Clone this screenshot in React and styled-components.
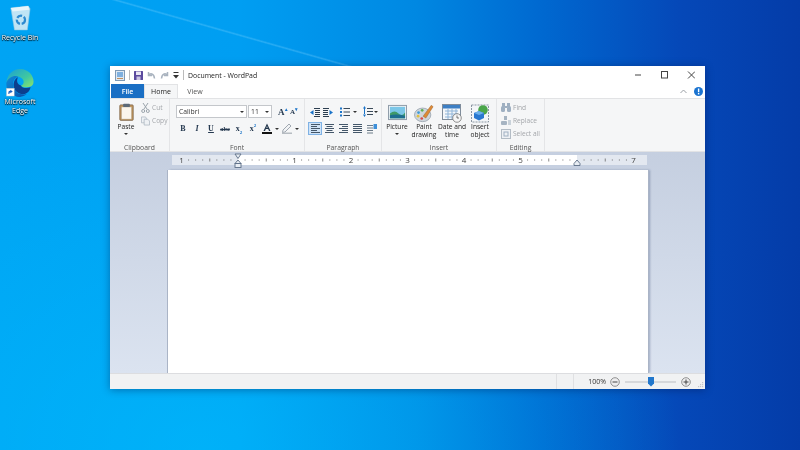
import styled, { createGlobalStyle } from 'styled-components'

const GlobalStyle = createGlobalStyle`
  html, body { margin: 0; padding: 0; width: 800px; height: 450px; overflow: hidden; }
  * { box-sizing: border-box; }
`

const Desktop = styled.div`
  position: relative;
  width: 800px;
  height: 450px;
  overflow: hidden;
  font-family: "Open Sans", "Liberation Sans", sans-serif;
  filter: blur(0.3px);
  background:
    linear-gradient(195.8deg, transparent 76px, rgba(150, 220, 255, 0.28) 77.6px, transparent 79px) 0 0 / 400px 66px no-repeat,
    radial-gradient(ellipse 480px 330px at 200px 450px, rgba(0, 195, 255, 0.5), rgba(0, 195, 255, 0) 100%),
    linear-gradient(90deg, #00a4f4 0%, #009ef2 30%, #0088e2 52%, #0068d0 68%, #0548b8 85%, #043ca8 100%);
`

const DesktopIcon = styled.div`
  position: absolute;
  left: ${({ $left }) => $left}px;
  top: ${({ $top }) => $top}px;
  width: 40px;
  display: flex;
  flex-direction: column;
  align-items: center;
  gap: ${({ $gap }) => $gap}px;
  color: #fff;
  font-size: 7px;
  line-height: 9px;
  text-align: center;
  text-shadow: 0 0 2px #000, 0 1px 1px #000;
`

const Window = styled.div`
  position: absolute;
  left: 110px;
  top: 66px;
  width: 595px;
  height: 323px;
  display: flex;
  flex-direction: column;
  background: #fff;
  box-shadow: 0 1px 8px rgba(0, 20, 70, 0.4);
  color: #333;
`

const TitleBar = styled.div`
  height: 18px;
  display: flex;
  align-items: center;
  padding-left: 5px;
  gap: 4px;
  font-size: 6.9px;
  color: #222;
`

const Sep = styled.div`
  width: 1px;
  height: 10px;
  background: #bbb;
`

const WinButtons = styled.div`
  margin-left: auto;
  display: flex;
  height: 100%;
  align-items: center;
  gap: 17px;
  padding-right: 10px;
`

const TabRow = styled.div`
  height: 14px;
  display: flex;
  align-items: stretch;
  font-size: 7px;
  position: relative;
`

const FileTab = styled.div`
  width: 33px;
  margin-left: 1px;
  background: #1a6fc4;
  color: #fff;
  font-weight: 600;
  display: flex;
  align-items: center;
  justify-content: center;
`

const Tab = styled.div`
  width: 34px;
  display: flex;
  align-items: center;
  justify-content: center;
  color: ${({ $active }) => ($active ? '#222' : '#555')};
  background: ${({ $active }) => ($active ? '#f5f6f7' : 'transparent')};
  border: 1px solid ${({ $active }) => ($active ? '#e2e3e5' : 'transparent')};
  border-bottom: none;
`

const TabTools = styled.div`
  margin-left: auto;
  display: flex;
  align-items: center;
  gap: 7px;
  padding-right: 2px;
`

const Ribbon = styled.div`
  height: 54px;
  display: flex;
  background: #f5f6f7;
  border-top: 1px solid #e2e3e5;
  border-bottom: 1px solid #e2e3e5;
`

const Group = styled.div`
  width: ${({ $w }) => $w}px;
  display: flex;
  flex-direction: column;
  border-right: 1px solid #e4e5e7;
`

const GroupBody = styled.div`
  flex: 1;
  display: flex;
  padding: ${({ $pad }) => $pad || '4px 0 0 4px'};
  gap: ${({ $gap }) => $gap || 0}px;
`

const GroupLabel = styled.div`
  height: 10px;
  margin-bottom: -1.5px;
  font-size: 6.8px;
  line-height: 10px;
  color: #555;
  text-align: center;
`

const BigButton = styled.div`
  width: ${({ $w }) => $w || 28}px;
  display: flex;
  flex-direction: column;
  align-items: center;
  font-size: 6.6px;
  line-height: 8px;
  color: #222;
  text-align: center;
  white-space: nowrap;
`

const IconSlot = styled.div`
  height: ${({ $h }) => $h || 19}px;
  display: flex;
  align-items: flex-start;
  justify-content: center;
`

const Caret = styled.span`
  display: inline-block;
  width: 0;
  height: 0;
  margin: ${({ $m }) => $m || '2px 0 0'};
  border: 2px solid transparent;
  border-top: 2.5px solid #333;
  border-bottom: none;
`

const SmallStack = styled.div`
  display: flex;
  flex-direction: column;
  gap: 4px;
`

const SmallButton = styled.div`
  display: flex;
  align-items: center;
  gap: 2px;
  height: 9px;
  font-size: 6.6px;
  color: #a3a6aa;
`

const FontColumn = styled.div`
  display: flex;
  flex-direction: column;
  gap: 5px;
`

const Row = styled.div`
  display: flex;
  align-items: center;
  gap: ${({ $gap }) => $gap || 0}px;
  padding-left: ${({ $left }) => $left || 0}px;
`

const Select = styled.div`
  width: ${({ $w }) => $w}px;
  height: 13px;
  background: #fff;
  border: 1px solid #c4c7cb;
  display: flex;
  align-items: center;
  justify-content: space-between;
  padding: 0 2px;
  font-size: 6.8px;
  color: #333;
`

const FormatGlyph = styled.span`
  width: 12px;
  font-family: "Liberation Serif", serif;
  font-size: ${({ $size }) => $size || 8}px;
  font-weight: 700;
  font-style: ${({ $italic }) => ($italic ? 'italic' : 'normal')};
  text-decoration: ${({ $line }) => $line || 'none'};
  color: #24384f;
  text-align: center;
  line-height: 10px;
  white-space: nowrap;
`

const GrowGlyph = styled.span`
  width: 11px;
  font-family: "Liberation Serif", serif;
  font-size: ${({ $size }) => $size}px;
  font-weight: 700;
  color: #24384f;
  line-height: 10px;
`

const BlueSup = styled.sup`
  color: #1a73c8;
  font-size: 5px;
  line-height: 0;
`

const BlueSub = styled.sub`
  color: #1a73c8;
  font-size: 5px;
  line-height: 0;
`

const Spacer = styled.span`
  width: ${({ $w }) => $w}px;
`

const AlignBox = styled.div`
  width: 14.2px;
  height: 13px;
  display: flex;
  align-items: center;
  justify-content: center;
  background: ${({ $on }) => ($on ? '#cfe3f7' : 'transparent')};
  border: 1px solid ${({ $on }) => ($on ? '#7fb2e5' : 'transparent')};
`

const Canvas = styled.div`
  flex: 1;
  min-height: 0;
  overflow: hidden;
  display: flex;
  flex-direction: column;
  padding: 3px 57px 0 62px;
  background: linear-gradient(#c5cfe0, #dbe3f0);
`

const RulerBar = styled.div`
  margin-bottom: 5px;
  height: 10px;
  flex: none;
`

const Paper = styled.div`
  flex: 1;
  margin-left: -4px;
  background: #fff;
  box-shadow: -1px 0 0 #aab4c6, 1px 0 0 #aab4c6, 2px 0 2px rgba(70, 90, 130, 0.4);
`

const StatusBar = styled.div`
  height: 16px;
  flex: none;
  display: flex;
  align-items: center;
  justify-content: flex-end;
  padding-right: 14px;
  background: #f1f2f3;
  border-top: 1px solid #dcdde0;
  font-size: 7px;
  color: #333;
  position: relative;
`

const StatusCell = styled.div`
  width: 18px;
  height: 100%;
  border-left: 1px solid #dfe0e2;
  border-right: 1px solid #dfe0e2;
  margin-right: 14px;
`

const ZoomText = styled.span`
  margin-right: 4px;
`

const SliderTrack = styled.div`
  position: relative;
  width: 51px;
  height: 2px;
  margin: 0 5px;
  background: #d6d8db;
`

const SliderThumb = styled.div`
  position: absolute;
  left: 23px;
  top: -4px;
  width: 6px;
  height: 10px;
  background: #2277cc;
  clip-path: polygon(0 0, 100% 0, 100% 70%, 50% 100%, 0 70%);
`

const GripMark = styled.svg`
  position: absolute;
  right: 1px;
  bottom: 1px;
`

const RecycleIcon = () => (
  <svg width="22" height="26" viewBox="0 0 24 28">
    <path d="M2 3 L21 1 L23 4 L20 27 L6 27 Z" fill="#bfe4f5" stroke="#8fc6df" strokeWidth=".6" />
    <path d="M2 3 L21 1 L22 5 L4 7 Z" fill="#e6f5fb" />
    <circle cx="13" cy="16" r="4.5" fill="none" stroke="#2d8ad0" strokeWidth="2.4" strokeDasharray="6 2" />
  </svg>
)

const EdgeIcon = () => (
  <svg width="30" height="29" viewBox="0 0 30 30">
    <defs>
      <linearGradient id="edgeTop" x1="0" y1="0" x2="1" y2="1">
        <stop offset="0" stopColor="#1a9fd6" />
        <stop offset=".6" stopColor="#40c8a0" />
        <stop offset="1" stopColor="#8fe36a" />
      </linearGradient>
      <linearGradient id="edgeBody" x1="0" y1="0" x2="1" y2="1">
        <stop offset="0" stopColor="#0f8ad8" />
        <stop offset="1" stopColor="#0c4fa8" />
      </linearGradient>
    </defs>
    <path d="M1 15 C2 5 9 1 15 1 C24 1 29 8 29 14 C29 19 25 20 21 20 C18 20 16 19 16 18 C20 17 20 11 14 9 C8 8 3 11 1 15 Z" fill="url(#edgeTop)" />
    <path d="M1 15 C3 10 9 7 13 9 C9 10 7 14 8 19 C9 25 15 29 22 27 C18 30 14 31 10 29 C4 27 0 21 1 15 Z" fill="url(#edgeBody)" />
    <path d="M16 18 C17 21 22 21 26 20 C25 24 23 26 20 27 C14 28 9 24 8.500 19 C8 14 10 11 13 9.500 C11 13 12 17 16 18 Z" fill="#0c3f8e" />
    <rect x="1" y="21" width="8" height="8" fill="#fff" stroke="#bbb" strokeWidth=".4" />
    <path d="M3 27 V25 Q3 23.500 5 23.500 V22.500 L7.500 24.200 L5 26 V25 Q4 25 4 27 Z" fill="#1a5fc0" />
  </svg>
)

const Scissors = () => (
  <svg width="9" height="10" viewBox="0 0 9 10" fill="none" stroke="#9aa3ab" strokeWidth="1">
    <path d="M2 0 L6 6 M7 0 L3 6" />
    <circle cx="2.200" cy="8" r="1.500" />
    <circle cx="6.800" cy="8" r="1.500" />
  </svg>
)

const CopyIcon = () => (
  <svg width="9" height="10" viewBox="0 0 10 10" fill="#eef1f4" stroke="#a9b3bd" strokeWidth=".8">
    <path d="M.5.5 H5 L6 2 V7 H.5 Z" />
    <path d="M3.500 3 H7.500 L9.500 5 V9.500 H3.500 Z" />
  </svg>
)

const PasteIcon = () => (
  <svg width="15" height="18" viewBox="0 0 18 21">
    <rect x="1" y="2" width="16" height="18.500" rx="1" fill="#c4975c" stroke="#7d6346" />
    <rect x="3" y="4.500" width="12" height="14.500" fill="#fbf6ec" stroke="#a99b85" strokeWidth=".5" />
    <rect x="5" y=".5" width="8" height="4" rx="1" fill="#5c6a78" />
  </svg>
)

const PictureIcon = () => (
  <svg width="19" height="17" viewBox="0 0 20 18">
    <rect x=".5" y="1.500" width="19" height="15" fill="#eef2f5" stroke="#8b98a6" />
    <rect x="2" y="3" width="16" height="12" fill="#7cc7e8" />
    <path d="M2 10 Q7 6 11 10 T18 9 V15 H2 Z" fill="#3f9a68" />
    <path d="M2 12 Q8 10 18 12.500 V15 H2 Z" fill="#1d6e8f" />
  </svg>
)

const PaintIcon = () => (
  <svg width="20" height="19" viewBox="0 0 22 20">
    <ellipse cx="9.500" cy="11.500" rx="9" ry="7.500" fill="#cfd6dc" stroke="#85929e" strokeWidth=".7" />
    <circle cx="5" cy="9" r="1.500" fill="#3c9bd9" />
    <circle cx="9" cy="6.500" r="1.500" fill="#60b050" />
    <circle cx="4.500" cy="13" r="1.500" fill="#e0c040" />
    <circle cx="8.500" cy="15.500" r="1.500" fill="#d84a4a" />
    <path d="M10 13 L19 1 L21 2.500 L13 15 Z" fill="#dd8a36" stroke="#96602a" strokeWidth=".5" />
  </svg>
)

const DateIcon = () => (
  <svg width="20" height="19" viewBox="0 0 20 19">
    <rect x=".5" y=".5" width="18" height="15" fill="#f4f7fa" stroke="#7f8c9b" />
    <rect x="1" y="1" width="17" height="3.500" fill="#3d7fc4" />
    <path d="M3 7 H16 M3 10 H16 M3 13 H16 M6 5 V15 M10 5 V15 M14 5 V15" stroke="#8fb4d8" strokeWidth="1" />
    <circle cx="15" cy="14" r="4.300" fill="#f5f5f5" stroke="#777" strokeWidth=".8" />
    <path d="M15 11.500 V14 H17" fill="none" stroke="#444" strokeWidth=".7" />
  </svg>
)

const ObjectIcon = () => (
  <svg width="19" height="19" viewBox="0 0 19 19">
    <rect x=".5" y="1" width="17" height="17" fill="#f4f6f8" stroke="#8b96a3" strokeDasharray="2 1" />
    <circle cx="12" cy="6" r="4.800" fill="#4aa64a" />
    <path d="M3 9 L8 7 L13 9 V14 L8 16.500 L3 14 Z" fill="#2a78d0" />
    <path d="M3 9 L8 11 L13 9 L8 7 Z" fill="#6cb0ec" />
  </svg>
)

const IndentIcon = ({ flip }) => (
  <svg width="10" height="10" viewBox="0 0 10 10" fill="#2c3e50" style={flip ? { transform: 'scaleX(-1)' } : undefined}>
    <path d="M4 1 H10 V2 H4 Z M5 3 H10 V4 H5 Z M5 5 H10 V6 H5 Z M5 7 H10 V8 H5 Z M4 9 H10 V10 H4 Z" />
    <path d="M0 5.500 L3.500 3 V8 Z" fill="#1a73c8" />
  </svg>
)

const BulletIcon = () => (
  <svg width="10" height="10" viewBox="0 0 10 10">
    <path d="M3.500 1 H10 V2 H3.500 Z M3.500 4.500 H10 V5.500 H3.500 Z M3.500 8 H10 V9 H3.500 Z" fill="#3a4a5a" />
    <path d="M0 .500 H2 V2.500 H0 Z M0 4 H2 V6 H0 Z M0 7.500 H2 V9.500 H0 Z" fill="#1a73c8" />
  </svg>
)

const SpacingIcon = () => (
  <svg width="10" height="11" viewBox="0 0 10 11">
    <path d="M4 2 H10 V3 H4 Z M4 5 H10 V6 H4 Z M4 8 H10 V9 H4 Z" fill="#3a4a5a" />
    <path d="M1.500 0 L3 2.500 H0 Z M1.500 11 L3 8.500 H0 Z M1 2 H2 V9 H1 Z" fill="#1a73c8" />
  </svg>
)

const AlignIcon = ({ kind }) => {
  const rows = [9, 6, 9, 6, 9]
  return (
    <svg width="9" height="9" viewBox="0 0 9 9" fill="#44576a">
      {rows.map((w, i) => {
        const wide = kind === 'justify' ? 9 : w
        const x = kind === 'center' ? (9 - wide) / 2 : kind === 'right' ? 9 - wide : 0
        return <rect key={i} x={x} y={i * 2} width={wide} height="1" />
      })}
    </svg>
  )
}

const ListOrderIcon = () => (
  <svg width="10" height="10" viewBox="0 0 10 10">
    <path d="M0 1 H6 V2 H0 Z M0 3.500 H6 V4.500 H0 Z M0 6 H6 V7 H0 Z M0 8.500 H6 V9.500 H0 Z" fill="#6b7a88" />
    <rect x="6.500" y="0" width="3.500" height="5" fill="#3f8fd8" />
  </svg>
)

const TextColorIcon = () => (
  <svg width="12" height="11" viewBox="0 0 12 11">
    <path d="M6 .500 L9.500 8 H8 L7.200 6 H4.800 L4 8 H2.500 Z M5.300 4.800 H6.700 L6 3 Z" fill="#1f3349" />
    <rect x="1" y="9" width="10" height="2" fill="#111" />
  </svg>
)

const HighlightIcon = () => (
  <svg width="12" height="11" viewBox="0 0 12 11">
    <path d="M2 7 L8 1 L10 3 L4 9 L1.500 9.500 Z" fill="#f1f3f5" stroke="#7b8794" strokeWidth=".7" />
    <rect x="1" y="9.500" width="10" height="1.500" fill="#b6bcc2" />
  </svg>
)

const FindIcon = () => (
  <svg width="10" height="9" viewBox="0 0 10 9" fill="#9fb0c2">
    <rect x="0" y="3" width="4" height="6" rx="1.500" />
    <rect x="6" y="3" width="4" height="6" rx="1.500" />
    <rect x="1" y="0" width="3" height="4" />
    <rect x="6" y="0" width="3" height="4" />
    <rect x="4" y="3" width="2" height="2" />
  </svg>
)

const ReplaceIcon = () => (
  <svg width="10" height="10" viewBox="0 0 10 10" fill="#a6b4c2">
    <rect x="3" y="0" width="3" height="4" />
    <rect x="0" y="5" width="6" height="4" rx="1" />
    <rect x="7" y="4" width="3" height="5" fill="#c9d2da" />
  </svg>
)

const SelectAllIcon = () => (
  <svg width="10" height="10" viewBox="0 0 10 10">
    <rect x=".5" y=".5" width="9" height="9" fill="#eef1f4" stroke="#b3bcc5" />
    <rect x="3" y="3" width="4" height="4" fill="none" stroke="#9fb0c2" />
  </svg>
)

const WinMin = () => (
  <svg width="10" height="10" viewBox="0 0 10 10"><path d="M4 5 H10" stroke="#444" strokeWidth="1" /></svg>
)

const WinMax = () => (
  <svg width="10" height="10" viewBox="0 0 10 10"><rect x="3.500" y="1.500" width="6" height="6.500" fill="none" stroke="#444" strokeWidth="1" /></svg>
)

const WinClose = () => (
  <svg width="10" height="10" viewBox="0 0 10 10"><path d="M3 1.500 L10 8.500 M10 1.500 L3 8.500" stroke="#444" strokeWidth="1" /></svg>
)

const QuickApp = () => (
  <svg width="10" height="11" viewBox="0 0 10 11">
    <rect x=".5" y=".5" width="9" height="10" fill="#dfe9f3" stroke="#7f9ab5" />
    <rect x="2" y="2" width="6" height="5" fill="#7fb0df" />
    <rect x="2" y="8" width="6" height="1" fill="#c09060" />
  </svg>
)

const QuickSave = () => (
  <svg width="9" height="9" viewBox="0 0 9 9">
    <rect width="9" height="9" rx=".5" fill="#5b4a9e" />
    <rect x="2" y=".5" width="5" height="3.500" fill="#e9e6f4" />
    <rect x="2.500" y="5.500" width="4" height="3.500" fill="#c9c3e2" />
  </svg>
)

const QuickArrow = ({ flip }) => (
  <svg width="9" height="9" viewBox="0 0 9 9" fill="none" stroke="#a9b3bf" strokeWidth="1.500" style={flip ? { transform: 'scaleX(-1)' } : undefined}>
    <path d="M1.500 1 V4.500 H5 M1.500 4.500 C3 2 7 2 7.500 7.500" />
  </svg>
)

const QuickMenu = () => (
  <svg width="6" height="7" viewBox="0 0 6 7" fill="#333"><rect x=".5" width="5" height="1" /><path d="M0 3 H6 L3 6.500 Z" /></svg>
)

const CollapseIcon = () => (
  <svg width="7" height="5" viewBox="0 0 7 5" fill="none" stroke="#9a9fa5" strokeWidth="1"><path d="M.5 4 L3.500 1 L6.500 4" /></svg>
)

const HelpIcon = () => (
  <svg width="9" height="9" viewBox="0 0 9 9">
    <circle cx="4.500" cy="4.500" r="4.500" fill="#1a73d0" />
    <rect x="3.900" y="1.500" width="1.400" height="3.700" fill="#fff" />
    <rect x="3.900" y="6" width="1.400" height="1.400" fill="#fff" />
  </svg>
)

const ZoomRound = ({ plus }) => (
  <svg width="10" height="10" viewBox="0 0 10 10">
    <circle cx="5" cy="5" r="4.300" fill="#ededee" stroke="#777" strokeWidth=".8" />
    <path d={plus ? 'M2.500 5 H7.500 M5 2.500 V7.500' : 'M2.500 5 H7.500'} stroke="#444" strokeWidth="1" />
  </svg>
)

const Grip = () => (
  <GripMark width="6" height="6" viewBox="0 0 6 6" fill="#c5c7ca">
    <rect x="4" y="0" width="1.200" height="1.200" />
    <rect x="2" y="2" width="1.200" height="1.200" />
    <rect x="4" y="2" width="1.200" height="1.200" />
    <rect x="0" y="4" width="1.200" height="1.200" />
    <rect x="2" y="4" width="1.200" height="1.200" />
    <rect x="4" y="4" width="1.200" height="1.200" />
  </GripMark>
)

// ruler runs x=172..647 in page pixels, 1 inch is 56.5px, left margin at 238
const INCH = 56.5
const ZERO = 66

const Ruler = () => {
  const marks = []
  for (let i = -1; i <= 7; i += 0.125) {
    const x = ZERO + i * INCH
    if (x < 4 || x > 472) continue
    if (Number.isInteger(i)) continue
    const half = i * 2 === Math.round(i * 2)
    marks.push(
      <rect key={i} x={x - 0.5} y={half ? 3.500 : 4.500} width="1" height={half ? 3 : 1} fill="#555" opacity={half ? 0.7 : 0.8} />
    )
  }
  const spots = [[-1, 1], [1, 1], [2, 2], [3, 3], [4, 4], [5, 5], [7, 7]]
  const edge = ZERO + 6 * INCH
  return (
    <svg width="475" height="10" viewBox="0 0 475 10" style={{ display: 'block', overflow: 'visible' }}>
      <rect width="475" height="10" fill="#e3e8f0" />
      <rect x={ZERO} width={6 * INCH} height="10" fill="#fff" />
      {marks}
      {spots.map(([s, label]) => (
        <text key={s} x={ZERO + s * INCH} y="8" fontSize="8" textAnchor="middle" fill="#444" fontFamily="Open Sans, sans-serif">
          {label}
        </text>
      ))}
      <path d={`M${ZERO - 3} -1 H${ZERO + 3} L${ZERO} 3.500 Z`} fill="#e8edf3" stroke="#5c6e86" strokeWidth=".9" />
      <path d={`M${ZERO} 5 L${ZERO + 3} 8.500 H${ZERO - 3} Z`} fill="#e8edf3" stroke="#5c6e86" strokeWidth=".9" />
      <rect x={ZERO - 3} y="8.500" width="6" height="4" fill="#e8edf3" stroke="#5c6e86" strokeWidth=".9" />
      <path d={`M${edge} 5 L${edge + 3} 8.500 V10.500 H${edge - 3} V8.500 Z`} fill="#e8edf3" stroke="#5c6e86" strokeWidth=".9" />
    </svg>
  )
}

export default function App() {
  return (
    <>
      <GlobalStyle />
      <Desktop>
        <DesktopIcon $left={0} $top={5} $gap={2}>
          <RecycleIcon />
          <span>Recycle Bin</span>
        </DesktopIcon>
        <DesktopIcon $left={0} $top={68} $gap={0}>
          <EdgeIcon />
          <span>Microsoft<br />Edge</span>
        </DesktopIcon>
        <Window>
          <TitleBar>
            <QuickApp />
            <Sep />
            <QuickSave />
            <QuickArrow />
            <QuickArrow flip />
            <QuickMenu />
            <Sep />
            <span>Document - WordPad</span>
            <WinButtons>
              <WinMin />
              <WinMax />
              <WinClose />
            </WinButtons>
          </TitleBar>
          <TabRow>
            <FileTab>File</FileTab>
            <Tab $active>Home</Tab>
            <Tab>View</Tab>
            <TabTools>
              <CollapseIcon />
              <HelpIcon />
            </TabTools>
          </TabRow>
          <Ribbon>
            <Group $w={60}>
              <GroupBody $gap={3}>
                <BigButton $w={24}>
                  <IconSlot $h={20}><PasteIcon /></IconSlot>
                  <span>Paste</span>
                  <Caret />
                </BigButton>
                <SmallStack>
                  <SmallButton><Scissors /> Cut</SmallButton>
                  <SmallButton><CopyIcon /> Copy</SmallButton>
                </SmallStack>
              </GroupBody>
              <GroupLabel>Clipboard</GroupLabel>
            </Group>
            <Group $w={135}>
              <GroupBody $pad="6px 0 0 6px">
                <FontColumn>
                  <Row $gap={1}>
                    <Select $w={71}>Calibri<Caret $m="0" /></Select>
                    <Select $w={24}>11<Caret $m="0" /></Select>
                    <Spacer $w={4} />
                    <GrowGlyph $size={9}>A<BlueSup>▴</BlueSup></GrowGlyph>
                    <GrowGlyph $size={7}>A<BlueSup>▾</BlueSup></GrowGlyph>
                  </Row>
                  <Row $gap={2} $left={1}>
                    <FormatGlyph>B</FormatGlyph>
                    <FormatGlyph $italic>I</FormatGlyph>
                    <FormatGlyph $line="underline">U</FormatGlyph>
                    <FormatGlyph $size={6.5} $line="line-through">abc</FormatGlyph>
                    <FormatGlyph>x<BlueSub>2</BlueSub></FormatGlyph>
                    <FormatGlyph>x<BlueSup>2</BlueSup></FormatGlyph>
                    <TextColorIcon />
                    <Caret $m="0" />
                    <HighlightIcon />
                    <Caret $m="0" />
                  </Row>
                </FontColumn>
              </GroupBody>
              <GroupLabel>Font</GroupLabel>
            </Group>
            <Group $w={77}>
              <GroupBody $pad="7px 0 0 3px">
                <FontColumn>
                  <Row $gap={3} $left={2}>
                    <IndentIcon />
                    <IndentIcon flip />
                    <Spacer $w={1} />
                    <BulletIcon />
                    <Caret $m="0" />
                    <Spacer $w={0} />
                    <SpacingIcon />
                    <Caret $m="0 0 0 -2px" />
                  </Row>
                  <Row>
                    <AlignBox $on><AlignIcon kind="left" /></AlignBox>
                    <AlignBox><AlignIcon kind="center" /></AlignBox>
                    <AlignBox><AlignIcon kind="right" /></AlignBox>
                    <AlignBox><AlignIcon kind="justify" /></AlignBox>
                    <AlignBox><ListOrderIcon /></AlignBox>
                  </Row>
                </FontColumn>
              </GroupBody>
              <GroupLabel>Paragraph</GroupLabel>
            </Group>
            <Group $w={115}>
              <GroupBody $pad="5px 0 0 2px">
                <BigButton $w={26}><IconSlot><PictureIcon /></IconSlot><span>Picture</span><Caret /></BigButton>
                <BigButton><IconSlot><PaintIcon /></IconSlot><span>Paint<br />drawing</span></BigButton>
                <BigButton><IconSlot><DateIcon /></IconSlot><span>Date and<br />time</span></BigButton>
                <BigButton><IconSlot><ObjectIcon /></IconSlot><span>Insert<br />object</span></BigButton>
              </GroupBody>
              <GroupLabel>Insert</GroupLabel>
            </Group>
            <Group $w={48}>
              <GroupBody>
                <SmallStack>
                  <SmallButton><FindIcon /> Find</SmallButton>
                  <SmallButton><ReplaceIcon /> Replace</SmallButton>
                  <SmallButton><SelectAllIcon /> Select all</SmallButton>
                </SmallStack>
              </GroupBody>
              <GroupLabel>Editing</GroupLabel>
            </Group>
          </Ribbon>
          <Canvas>
            <RulerBar><Ruler /></RulerBar>
            <Paper />
          </Canvas>
          <StatusBar>
            <StatusCell />
            <ZoomText>100%</ZoomText>
            <ZoomRound />
            <SliderTrack><SliderThumb /></SliderTrack>
            <ZoomRound plus />
            <Grip />
          </StatusBar>
        </Window>
      </Desktop>
    </>
  )
}
